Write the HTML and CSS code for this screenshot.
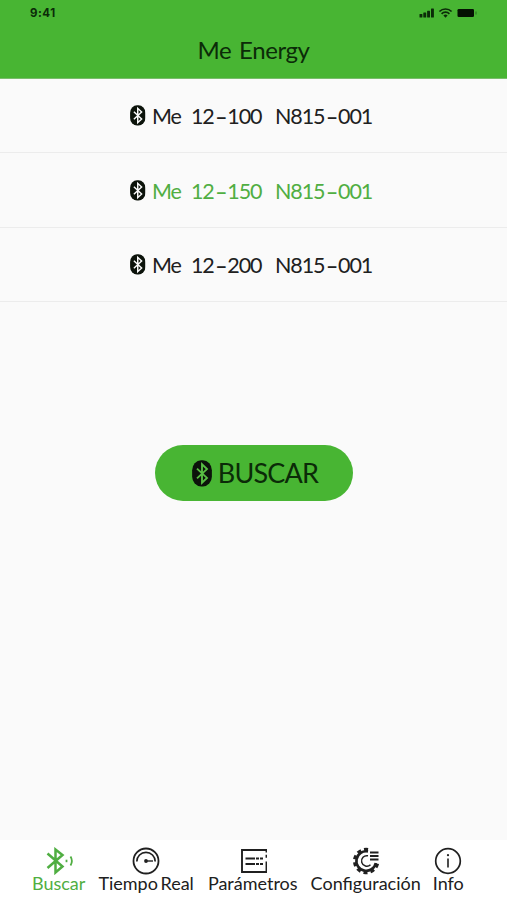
FILE: index.html
```html
<!DOCTYPE html>
<html lang="es">
<head>
<meta charset="utf-8">
<title>Me Energy</title>
<link rel="stylesheet" href="styles.css">
</head>
<body>
<svg class="defs" width="0" height="0" aria-hidden="true">
  <symbol id="bt" viewBox="0 0 16 22" preserveAspectRatio="none">
    <rect x="0.1" y="0.3" width="15.8" height="21.2" rx="7.2" ry="8"  fill="#0c130b"/>
    <path d="M4 7l8 7.6-4 3.9V3.5l4 3.9L4 15" fill="none" stroke="var(--rune)" stroke-width="1.5"/>
  </symbol>
</svg>
<header class="header">
  <div class="status">
    <span class="time">9:41</span>
    <svg class="signals" width="60" height="12" viewBox="0 0 60 12">
      <g fill="#0b2b08">
        <rect x="0.5" y="7" width="2.9" height="3.5" rx=".5"/><rect x="4.3" y="5.5" width="2.9" height="5" rx=".5"/><rect x="8.1" y="3.7" width="2.9" height="6.8" rx=".5"/><rect x="12" y="1.6" width="2.9" height="8.9" rx=".5"/>
        <path d="M26.500 10.700l-2.100-2.100a3 3 0 0 1 4.200 0z"/>
      </g>
      <path d="M22.600 6.800a5.500 5.500 0 0 1 7.800 0M20.400 4.500a8.700 8.700 0 0 1 12.200 0" fill="none" stroke="#0b2b08" stroke-width="1.700"/>
      <rect x="38.500" y="2" width="16.500" height="8" rx="1.300" fill="#041102"/>
      <path d="M57 4.500v3" stroke="#2d7a20" stroke-width="1.200"/>
    </svg>
  </div>
  <h1 class="title">Me Energy</h1>
</header>
<main class="main">
  <ul class="devices">
    <li class="device"><svg class="bt"><use href="#bt"/></svg><span class="brand">Me</span><span class="model">12<i>–</i>100</span><span class="serial">N815<i>–</i>001</span></li>
    <li class="device active"><svg class="bt"><use href="#bt"/></svg><span class="brand">Me</span><span class="model">12<i>–</i>150</span><span class="serial">N815<i>–</i>001</span></li>
    <li class="device"><svg class="bt"><use href="#bt"/></svg><span class="brand">Me</span><span class="model">12<i>–</i>200</span><span class="serial">N815<i>–</i>001</span></li>
  </ul>
  <button class="search"><svg class="bt"><use href="#bt"/></svg><span>BUSCAR</span></button>
</main>
<nav class="tabs">
  <a class="tab active">
    <svg width="30" height="28" viewBox="0 0 30 28" fill="none" stroke="currentColor" stroke-width="2.500"><path d="M3.500 6.500l15 13-7 6V2.500l7 5.500-15 13"/><path d="M22.500 12.700v2.500" stroke-width="1.800"/><path d="M26.500 9.500q2.800 4.500 0 9" stroke-width="1.800"/></svg>
    <span>Buscar</span>
  </a>
  <a class="tab realtime">
    <svg width="28" height="28" viewBox="0 0 28 28" fill="none" stroke="currentColor"><circle cx="14" cy="14" r="12.500" stroke-width="1.800"/><path d="M4.800 14.500a9.200 9.200 0 0 1 18.400 0" stroke-width="1.700"/><path d="M14 14h7" stroke-width="1.400"/><circle cx="14" cy="14" r="1.900" fill="currentColor" stroke="none"/></svg>
    <span>Tiempo Real</span>
  </a>
  <a class="tab params">
    <svg width="28" height="28" viewBox="0 0 28 28" fill="none" stroke="currentColor" stroke-width="1.900"><path d="M27.500 5.500V3H3v22h24.500V14.500M27.500 7.800v3"/><path d="M6.500 11.500h9.500M17 11.500h3M21 11.500h3M6.500 17h9.500M17 17h3M21 17h3" stroke-width="1.900"/></svg>
    <span>Parámetros</span>
  </a>
  <a class="tab config">
    <svg width="28" height="28" viewBox="0 0 28 28" fill="none" stroke="currentColor"><path d="M16 4.400A9.800 9.800 0 1 0 23.800 16" stroke-width="2.600"/><path d="M16 2.900A11.300 11.300 0 1 0 25.300 16" stroke-width="3.800" stroke-dasharray="3.900 3"/><path d="M16 8.800a5.300 5.300 0 1 0 2.500 9" stroke-width="1.500"/><path d="M18 5.500h8.500M18 9h8.500M18 12.500h8.500" stroke-width="2"/></svg>
    <span>Configuración</span>
  </a>
  <a class="tab info">
    <svg width="28" height="28" viewBox="0 0 28 28" fill="none" stroke="currentColor"><circle cx="14" cy="14" r="12.300" stroke-width="1.700"/><path d="M14 11.500v9" stroke-width="1.600"/><circle cx="14" cy="8.200" r="1.100" fill="currentColor" stroke="none"/></svg>
    <span>Info</span>
  </a>
</nav>
</body>
</html>
```
FILE: styles.css
```css
* { box-sizing: border-box; }
body {
  margin: 0;
  height: 900px;
  display: flex;
  flex-direction: column;
  background: #fafafa;
  color: #202020;
  font-family: Lato, "Liberation Sans", sans-serif;
}
.defs { position: absolute; }
.header { height: 79px; background: #48b533; border-bottom: 1px solid #79bd6c; }
.status { display: flex; justify-content: space-between; padding: 7px 26px 0 30px; height: 26px; }
.time { font: 700 11.5px/13px Inter, sans-serif; color: #0b2b08; letter-spacing: 0.5px; }
.signals { margin-right: 2px; }
.title { margin: 7px 0 0; text-align: center; font-size: 24px; line-height: 33px; font-weight: 400; color: #0b2b08; word-spacing: 2px; letter-spacing: -0.4px; }
.main { flex: 1; display: flex; flex-direction: column; align-items: center; }
.devices { width: 100%; margin: 0; padding: 0; list-style: none; }
.device {
  height: 74.400px;
  display: flex;
  align-items: center;
  padding: 0 0 0 130px;
  border-bottom: 1px solid #ececec;
  font-size: 21.5px;
  line-height: 26px;
  letter-spacing: -1.1px;
  white-space: nowrap;
}
.device span { position: relative; top: 0.5px; }
.device i { font-style: normal; font-weight: 700; font-size: 21px; line-height: 0; margin: 0 1px 0 1.5px; }
.device.active { color: #50ae42; }
.bt { --rune: #fafafa; width: 15.5px; height: 21px; flex: none; }
.brand { width: 39px; margin-left: 6.5px; }
.model { width: 84px; }
.search {
  margin-top: 143px;
  width: 198px;
  height: 56px;
  padding: 0 0 0 3px;
  border: 0;
  border-radius: 28px;
  background: #48b533;
  color: #0b2b08;
  font: 27px/34px Lato, sans-serif;
  letter-spacing: -0.8px;
  display: flex;
  align-items: center;
  justify-content: center;
  gap: 6px;
}
.search .bt { --rune: #58bd43; width: 20px; height: 27px; }
.tabs { height: 60px; background: #fff; display: flex; padding: 7px 0 0 32px; gap: 13px; }
.tab { display: flex; flex-direction: column; align-items: center; font-size: 18px; line-height: 20px; white-space: nowrap; }
.tab span { margin-top: -2px; }
.tab.active { color: #50ae42; }
.realtime { word-spacing: -2px; }
.params { margin-left: 1px; }
.config svg { margin-left: 1px; }
.info { margin-left: -1px; }
```
